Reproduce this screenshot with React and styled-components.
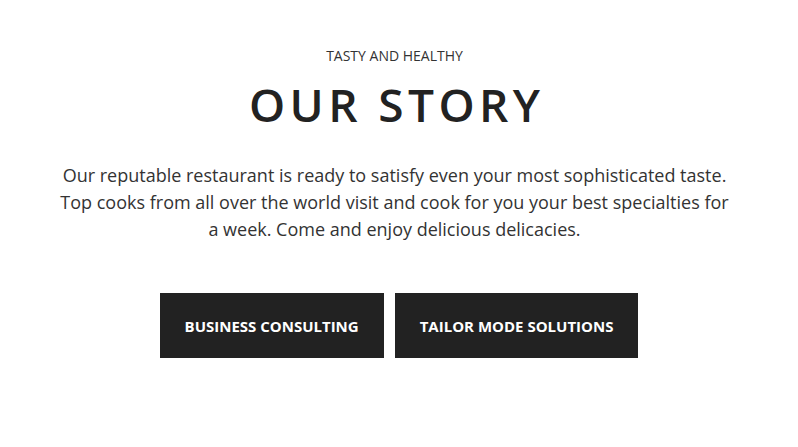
import React from "react";
import styled, { createGlobalStyle } from "styled-components";

const GlobalStyle = createGlobalStyle`
  body {
    margin: 0;
    background: #fff;
    font-family: "Open Sans", "Liberation Sans", sans-serif;
  }
`;

function App() {
  return (
    <Section>
      <GlobalStyle />
      <Intro>
        <Kicker>Tasty and healthy</Kicker>
        <Title>Our Story</Title>
        <Text>
          Our reputable restaurant is ready to satisfy even your most sophisticated taste.
          Top cooks from all over the world visit and cook for you your best specialties for
          a week. Come and enjoy delicious delicacies.
        </Text>
      </Intro>
      <Buttons>
        <Button>Business Consulting</Button>
        <Button>Tailor Mode Solutions</Button>
      </Buttons>
    </Section>
  );
}

export default App;

const Section = styled.section`
  display: flex;
  flex-direction: column;
  align-items: center;
  padding-top: 46px;
  text-align: center;
`;

const Intro = styled.div`
  display: flex;
  flex-direction: column;
  align-items: center;
  align-self: stretch;
  padding-right: 9px;
`;

const Kicker = styled.p`
  margin: 0;
  font-size: 14px;
  line-height: 20px;
  text-transform: uppercase;
  color: #333;
`;

const Title = styled.h1`
  margin: 8px -4.4px 0 0;
  font-size: 46px;
  line-height: 60px;
  font-weight: 600;
  letter-spacing: 4.4px;
  text-transform: uppercase;
  color: #222;
`;

const Text = styled.p`
  margin: 28px 0 0;
  max-width: 675px;
  font-size: 18px;
  line-height: 27px;
  color: #333;
`;

const Buttons = styled.div`
  display: flex;
  gap: 11px;
  margin-top: 50px;
`;

const Button = styled.button`
  height: 65px;
  padding: 0 25px;
  border: none;
  background: #222;
  color: #fff;
  font-family: inherit;
  font-size: 15px;
  font-weight: 700;
  text-transform: uppercase;
  cursor: pointer;
`;
